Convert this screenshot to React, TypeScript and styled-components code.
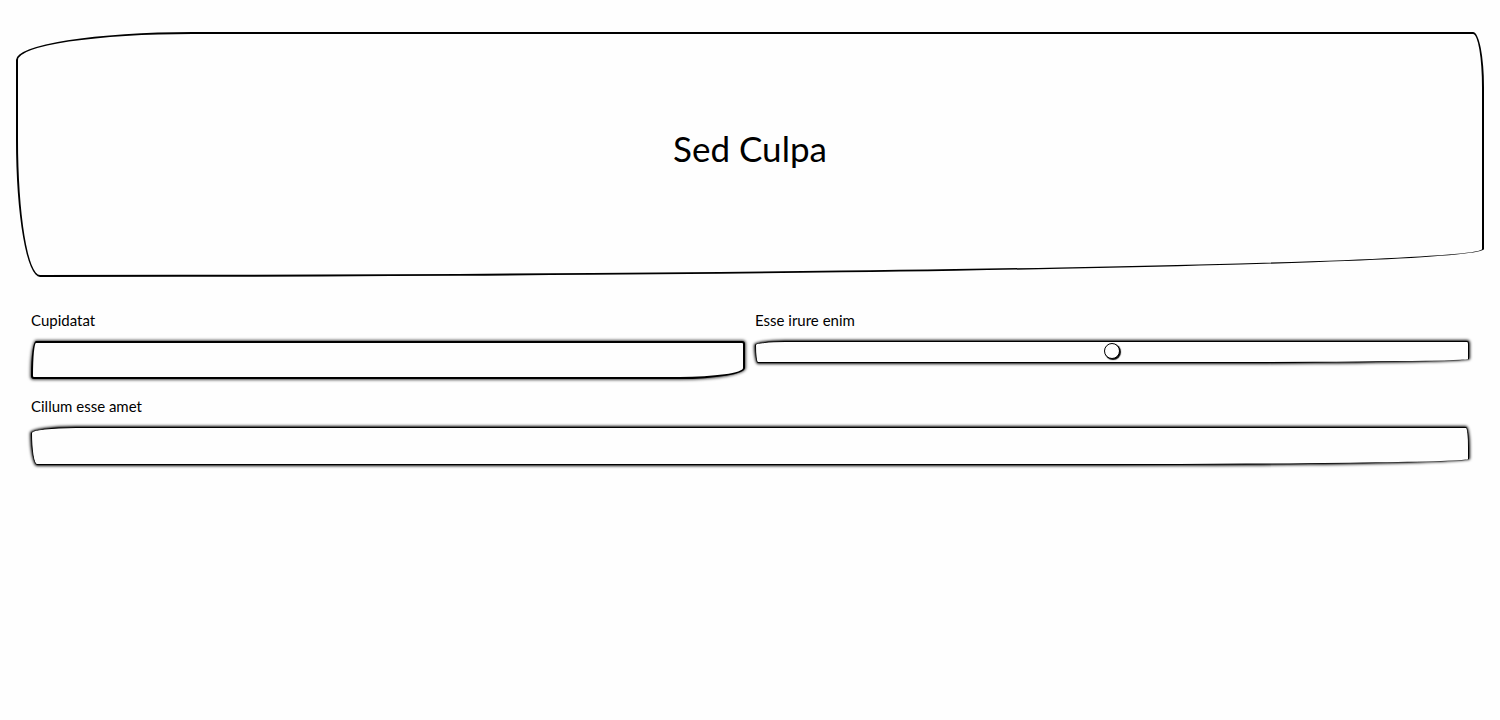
import React from "react";
import styled, { createGlobalStyle } from "styled-components";

const GlobalStyle = createGlobalStyle`
  *, *::before, *::after { box-sizing: border-box; }
  body {
    margin: 0;
    background: #fefefe;
    color: #000;
    font-family: Lato, "Liberation Sans", sans-serif;
    font-size: 16px;
    line-height: 20px;
  }
`;

const Page = styled.main`
  padding: 32px 16px;
`;

const Hero = styled.header`
  display: flex;
  align-items: center;
  justify-content: center;
  min-height: 245px;
  padding: 0 24px 14px;
  border: 2px solid #000;
  border-radius: 12% 11px calc(100% - 24px) 24px / 28px 55px 28px 137px;
`;

const Title = styled.h1`
  margin: 0;
  font-size: 35px;
  line-height: 48px;
  font-weight: 400;
`;

const Form = styled.form`
  display: grid;
  grid-template-columns: 1fr 1fr;
  gap: 17px 10px;
  padding: 33px 15px;
`;

const Field = styled.div<{ $wide?: boolean }>`
  display: flex;
  flex-direction: column;
  gap: 11px;
  min-width: 0;
  grid-column: ${(p) => (p.$wide ? "1 / -1" : "auto")};
`;

const Label = styled.label`
  font-size: 15px;
`;

const TextInput = styled.input<{ $bold?: boolean }>`
  width: 100%;
  height: 38px;
  margin: 0;
  padding: 0 10px;
  font: inherit;
  color: inherit;
  background: #fefefe;
  outline: none;
  border: ${(p) => (p.$bold ? "2px" : "1px")} solid #000;
  border-radius: ${(p) =>
    p.$bold
      ? "5px 3px 65px 3px / 34px 3px 11px 3px"
      : "45px 3px 25% 6px / 6px 20px 6px 32px"};
  box-shadow: 0 0 3px 1px ${(p) => (p.$bold ? "rgba(0, 0, 0, 0.7)" : "#000")};
`;

const RangeInput = styled.input`
  appearance: none;
  width: 100%;
  height: 22px;
  margin: 0;
  padding: 0 0 2px;
  background: #fefefe;
  border: 1px solid #000;
  border-radius: 30px 2px 35% 3px / 4px 3px 4px 18px;
  box-shadow: 0 0 3px 1px #000;

  &::-webkit-slider-thumb {
    appearance: none;
    width: 16px;
    height: 16px;
    background: #fefefe;
    border: 1px solid #000;
    border-radius: 50%;
    box-shadow: 1px 1px 1px #000;
  }
`;

export default function App() {
  return (
    <>
      <GlobalStyle />
      <Page>
        <Hero>
          <Title>Sed Culpa</Title>
        </Hero>
        <Form>
          <Field>
            <Label htmlFor="cupidatat">Cupidatat</Label>
            <TextInput id="cupidatat" type="text" $bold />
          </Field>
          <Field>
            <Label htmlFor="irure">Esse irure enim</Label>
            <RangeInput id="irure" type="range" />
          </Field>
          <Field $wide>
            <Label htmlFor="cillum">Cillum esse amet</Label>
            <TextInput id="cillum" type="text" />
          </Field>
        </Form>
      </Page>
    </>
  );
}
